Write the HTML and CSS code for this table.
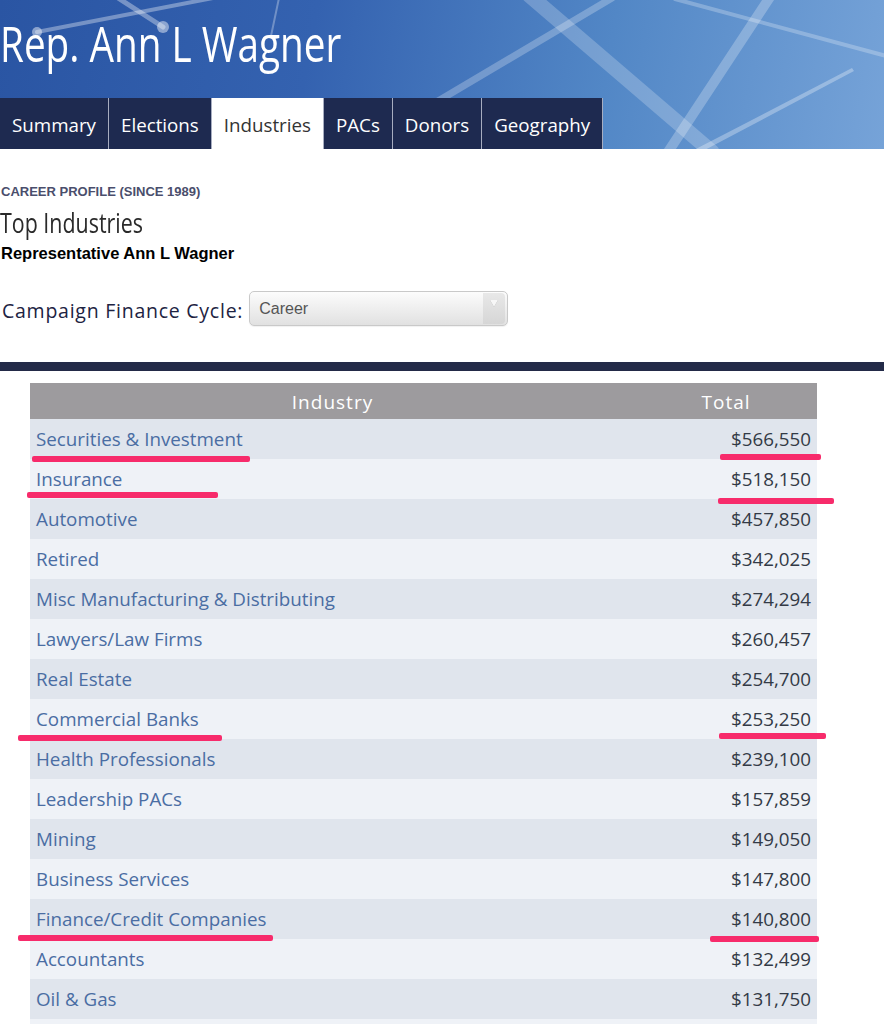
FILE: index.html
```html
<!DOCTYPE html>
<html lang="en">
<head>
<meta charset="utf-8">
<title>Rep. Ann L Wagner - Top Industries</title>
<link rel="stylesheet" href="styles.css">
</head>
<body>
<header class="banner">
  <svg class="banner-art" viewBox="0 0 884 149" preserveAspectRatio="none" aria-hidden="true">
    <g stroke="#ffffff" stroke-linecap="round" fill="none">
      <line x1="37" y1="32" x2="213" y2="-2" stroke-width="4" stroke-opacity="0.35"/>
      <line x1="118" y1="-2" x2="163" y2="27" stroke-width="5" stroke-opacity="0.35"/>
      <line x1="279" y1="-2" x2="271" y2="36" stroke-width="2" stroke-opacity="0.3"/>
      <line x1="529" y1="-5" x2="712" y2="152" stroke-width="15" stroke-opacity="0.22"/>
      <line x1="352" y1="152" x2="612" y2="-2" stroke-width="7" stroke-opacity="0.25"/>
      <line x1="770" y1="-3" x2="668" y2="152" stroke-width="10" stroke-opacity="0.25"/>
      <line x1="675" y1="-1" x2="890" y2="57" stroke-width="4" stroke-opacity="0.25"/>
    </g>
    <g fill="#ffffff">
      <circle cx="37" cy="32" r="5" fill-opacity="0.45"/>
      <circle cx="163" cy="27" r="6" fill-opacity="0.45"/>
      <polygon points="852,68 854,71 701,152 690,152" fill-opacity="0.3"/>
    </g>
  </svg>
  <h1 class="title"><span>Rep. Ann L Wagner</span></h1>
  <nav class="tabs">
    <a class="tab" href="#">Summary</a>
    <a class="tab" href="#">Elections</a>
    <a class="tab active" href="#">Industries</a>
    <a class="tab" href="#">PACs</a>
    <a class="tab" href="#">Donors</a>
    <a class="tab" href="#">Geography</a>
  </nav>
</header>

<section class="intro">
  <div class="kicker">CAREER PROFILE (SINCE 1989)</div>
  <h2 class="page-title"><span>Top Industries</span></h2>
  <div class="subject">Representative Ann L Wagner</div>
  <div class="cycle">
    <span class="cycle-label">Campaign Finance Cycle:</span>
    <div class="select">
      <span class="select-value">Career</span>
      <span class="select-arrow"><span class="tri"></span></span>
    </div>
  </div>
</section>

<div class="rule"></div>

<div class="table-wrap">
  <table class="data">
    <colgroup><col class="c-ind"><col class="c-amt"></colgroup>
    <thead>
      <tr><th>Industry</th><th>Total</th></tr>
    </thead>
    <tbody>
      <tr><td><a href="#">Securities &amp; Investment</a></td><td class="amt">$566,550</td></tr>
      <tr><td><a href="#">Insurance</a></td><td class="amt">$518,150</td></tr>
      <tr><td><a href="#">Automotive</a></td><td class="amt">$457,850</td></tr>
      <tr><td><a href="#">Retired</a></td><td class="amt">$342,025</td></tr>
      <tr><td><a href="#">Misc Manufacturing &amp; Distributing</a></td><td class="amt">$274,294</td></tr>
      <tr><td><a href="#">Lawyers/Law Firms</a></td><td class="amt">$260,457</td></tr>
      <tr><td><a href="#">Real Estate</a></td><td class="amt">$254,700</td></tr>
      <tr><td><a href="#">Commercial Banks</a></td><td class="amt">$253,250</td></tr>
      <tr><td><a href="#">Health Professionals</a></td><td class="amt">$239,100</td></tr>
      <tr><td><a href="#">Leadership PACs</a></td><td class="amt">$157,859</td></tr>
      <tr><td><a href="#">Mining</a></td><td class="amt">$149,050</td></tr>
      <tr><td><a href="#">Business Services</a></td><td class="amt">$147,800</td></tr>
      <tr><td><a href="#">Finance/Credit Companies</a></td><td class="amt">$140,800</td></tr>
      <tr><td><a href="#">Accountants</a></td><td class="amt">$132,499</td></tr>
      <tr><td><a href="#">Oil &amp; Gas</a></td><td class="amt">$131,750</td></tr>
      <tr><td></td><td class="amt"></td></tr>
    </tbody>
  </table>
  <span class="mark m1"></span>
  <span class="mark m2"></span>
  <span class="mark m3"></span>
  <span class="mark m4"></span>
  <span class="mark m5"></span>
  <span class="mark m6"></span>
  <span class="mark m7"></span>
  <span class="mark m8"></span>
</div>
</body>
</html>
```

FILE: styles.css
```css
* { box-sizing: border-box; }

body {
  margin: 0;
  background: #ffffff;
  font-family: "Open Sans", "DejaVu Sans", sans-serif;
  overflow: hidden;
}

/* ---------- banner ---------- */
.banner {
  position: relative;
  height: 149px;
  display: flex;
  flex-direction: column;
  background: linear-gradient(100deg, #2a55a3 0%, #3462b0 35%, #5287c6 68%, #76a3d8 100%);
  overflow: hidden;
}

.banner-art {
  position: absolute;
  left: 0;
  top: 0;
  width: 100%;
  height: 100%;
}

.title {
  position: relative;
  margin: 0;
  height: 98px;
  padding-top: 18px;
  font-size: 50px;
  line-height: 50px;
  font-weight: 400;
  color: #ffffff;
  white-space: nowrap;
}

.title span {
  display: inline-block;
  transform: scaleX(0.774);
  transform-origin: left center;
}

.tabs {
  position: relative;
  display: flex;
  height: 51px;
}

.tab {
  display: block;
  padding: 2px 12px 0;
  background: #1e2a50;
  color: #ffffff;
  font-size: 18.75px;
  line-height: 49px;
  text-decoration: none;
  border-right: 1px solid #a7adc0;
}

.tab.active {
  background: #ffffff;
  color: #333333;
}

/* ---------- intro ---------- */
.intro {
  padding-top: 35px;
}

.kicker {
  font-family: "Liberation Sans", Arial, sans-serif;
  font-weight: bold;
  font-size: 13px;
  line-height: 16px;
  color: #4a4e6c;
  padding-left: 1px;
}

.page-title {
  margin: 6px 0 0;
  font-size: 28px;
  line-height: 32px;
  font-weight: 400;
  color: #2a2a2a;
  white-space: nowrap;
}

.page-title span {
  display: inline-block;
  transform: scaleX(0.765);
  transform-origin: left center;
}

.subject {
  margin-top: 6px;
  padding-left: 1px;
  font-family: "Liberation Sans", Arial, sans-serif;
  font-weight: bold;
  font-size: 16.5px;
  line-height: 18px;
  color: #000000;
}

.cycle {
  display: flex;
  align-items: flex-start;
  margin-top: 29px;
  padding-left: 2px;
  gap: 6px;
}

.cycle-label {
  padding-top: 5px;
  font-size: 19.5px;
  line-height: 30px;
  letter-spacing: 0.75px;
  color: #1d2342;
}

.select {
  display: flex;
  justify-content: space-between;
  width: 259px;
  height: 35px;
  border: 1px solid #c9c9c9;
  border-radius: 5px;
  background: linear-gradient(#fcfcfc, #e1e1e1);
  box-shadow: 0 1px 1px rgba(0, 0, 0, 0.06);
}

.select-value {
  padding-left: 9px;
  font-family: "Liberation Sans", Arial, sans-serif;
  font-size: 16px;
  line-height: 33px;
  color: #555555;
}

.select-arrow {
  display: flex;
  align-items: center;
  justify-content: center;
  width: 22px;
  margin: 1px 2px 1px 0;
  border-radius: 0 4px 4px 0;
  background: linear-gradient(#e8e8e8, #d6d6d6);
}

.tri {
  width: 0;
  height: 0;
  border-left: 4px solid transparent;
  border-right: 4px solid transparent;
  border-top: 7px solid #f7f7f7;
  margin-top: -10px;
  filter: drop-shadow(0 0 0.5px #9a9a9a);
}

/* ---------- table ---------- */
.rule {
  height: 9px;
  margin-top: 36px;
  background: #232a48;
}

.table-wrap {
  position: relative;
  padding: 12px 0 0 30px;
}

.data {
  width: 787px;
  table-layout: fixed;
  border-collapse: collapse;
}

.c-ind { width: 605px; }
.c-amt { width: 182px; }

.data th {
  height: 36px;
  padding: 1px 0 0;
  background: #9d9b9e;
  color: #ffffff;
  font-weight: 400;
  font-size: 19px;
  letter-spacing: 1px;
  text-align: center;
}

.data td {
  height: 40px;
  padding: 0 6px;
  font-size: 18.8px;
  line-height: 40px;
  color: #333a46;
  white-space: nowrap;
}

.data tbody tr:nth-child(odd) td { background: #e0e5ed; }
.data tbody tr:nth-child(even) td { background: #eff2f7; }

.data td a {
  color: #4a6da3;
  text-decoration: none;
}

.data td.amt { text-align: right; }

/* hand-drawn highlight marks */
.mark {
  position: absolute;
  height: 6px;
  background: #f72b6b;
  border-radius: 2px;
}

.m1 { left: 32px;  top: 85px;  width: 218px; }
.m2 { left: 720px; top: 83px;  width: 101px; }
.m3 { left: 27px;  top: 121px; width: 191px; }
.m4 { left: 718px; top: 127px; width: 116px; }
.m5 { left: 18px;  top: 364px; width: 204px; }
.m6 { left: 719px; top: 362px; width: 107px; }
.m7 { left: 18px;  top: 564px; width: 255px; }
.m8 { left: 710px; top: 565px; width: 109px; }
```
